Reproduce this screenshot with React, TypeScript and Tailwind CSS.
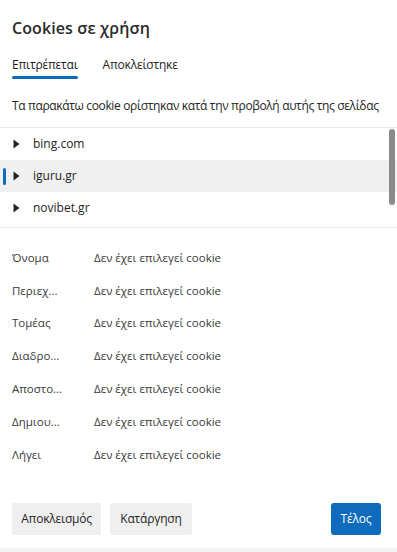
import React from "react";

const font = { fontFamily: '"Open Sans", "Noto Sans", sans-serif' };

function Tri() {
  return (
    <svg width="7" height="10" viewBox="0 0 7 10" className="shrink-0">
      <path d="M0.5 0.5 L6.5 5 L0.5 9.5 Z" fill="#242424" />
    </svg>
  );
}

const details = [
  "Όνομα",
  "Περιεχ...",
  "Τομέας",
  "Διαδρο...",
  "Αποστο...",
  "Δημιου...",
  "Λήγει",
];

export default function App() {
  return (
    <div
      className="w-[397px] h-[552px] bg-white text-[#242424] flex flex-col overflow-hidden"
      style={font}
    >
      <div className="px-3 pt-[16px] h-[24px] box-content text-[16px] leading-[24px] font-semibold text-[#2a2a2a] tracking-[0.1px]">
        Cookies σε χρήση
      </div>
      <div className="flex px-3 mt-[17px] gap-[25px] text-[12px] leading-[16px] tracking-[-0.2px]">
        <div className="flex flex-col">
          <span className="text-[#1a1a1a]">Επιτρέπεται</span>
          <div className="h-[3px] mt-[3px] bg-[#0f6cbd] rounded-full" />
        </div>
        <span>Αποκλείστηκε</span>
      </div>
      <div className="px-3 mt-[18px] text-[12px] leading-[18px] whitespace-nowrap tracking-[-0.35px]">
        Τα παρακάτω cookie ορίστηκαν κατά την προβολή αυτής της σελίδας
      </div>
      <div className="mt-[12px] relative h-[101px] border-t border-b border-[#ebebeb] overflow-hidden">
        <div className="flex flex-col text-[12px]">
          <div className="h-[32px] flex items-center pl-[13px] gap-[13px]">
            <Tri />
            <span>bing.com</span>
          </div>
          <div className="h-[32px] flex items-center pl-[13px] gap-[13px] bg-[#f0f0f0] relative">
            <div className="absolute left-[3px] top-[8px] w-[3px] h-[17px] rounded-full bg-[#0f6cbd]" />
            <Tri />
            <span>iguru.gr</span>
          </div>
          <div className="h-[32px] flex items-center pl-[13px] gap-[13px]">
            <Tri />
            <span>novibet.gr</span>
          </div>
        </div>
        <div className="absolute right-[2px] top-[1px] w-[6px] h-[76px] rounded-full bg-[#8a8a8a]" />
      </div>
      <div className="mt-[13px] flex flex-col text-[11.5px]">
        {details.map((d) => (
          <div key={d} className="h-[32.8px] flex items-center px-3">
            <span className="w-[82px] text-[#3a3a3a]">{d}</span>
            <span className="text-[#3a3a3a]">Δεν έχει επιλεγεί cookie</span>
          </div>
        ))}
      </div>
      <div className="flex-1" />
      <div className="flex items-center px-3 gap-[9px] text-[12px] mb-[13px] tracking-[-0.2px]">
        <button className="h-[32px] w-[89px] bg-[#efefef] rounded-[2px]">Αποκλεισμός</button>
        <button className="h-[32px] w-[82px] bg-[#efefef] rounded-[2px]">Κατάργηση</button>
        <div className="flex-1" />
        <button className="h-[32px] w-[50px] mr-[4px] bg-[#0f6cbd] text-white rounded-[3px]">Τέλος</button>
      </div>
      <div className="h-[4px] bg-[#f3f3f3]" />
    </div>
  );
}
